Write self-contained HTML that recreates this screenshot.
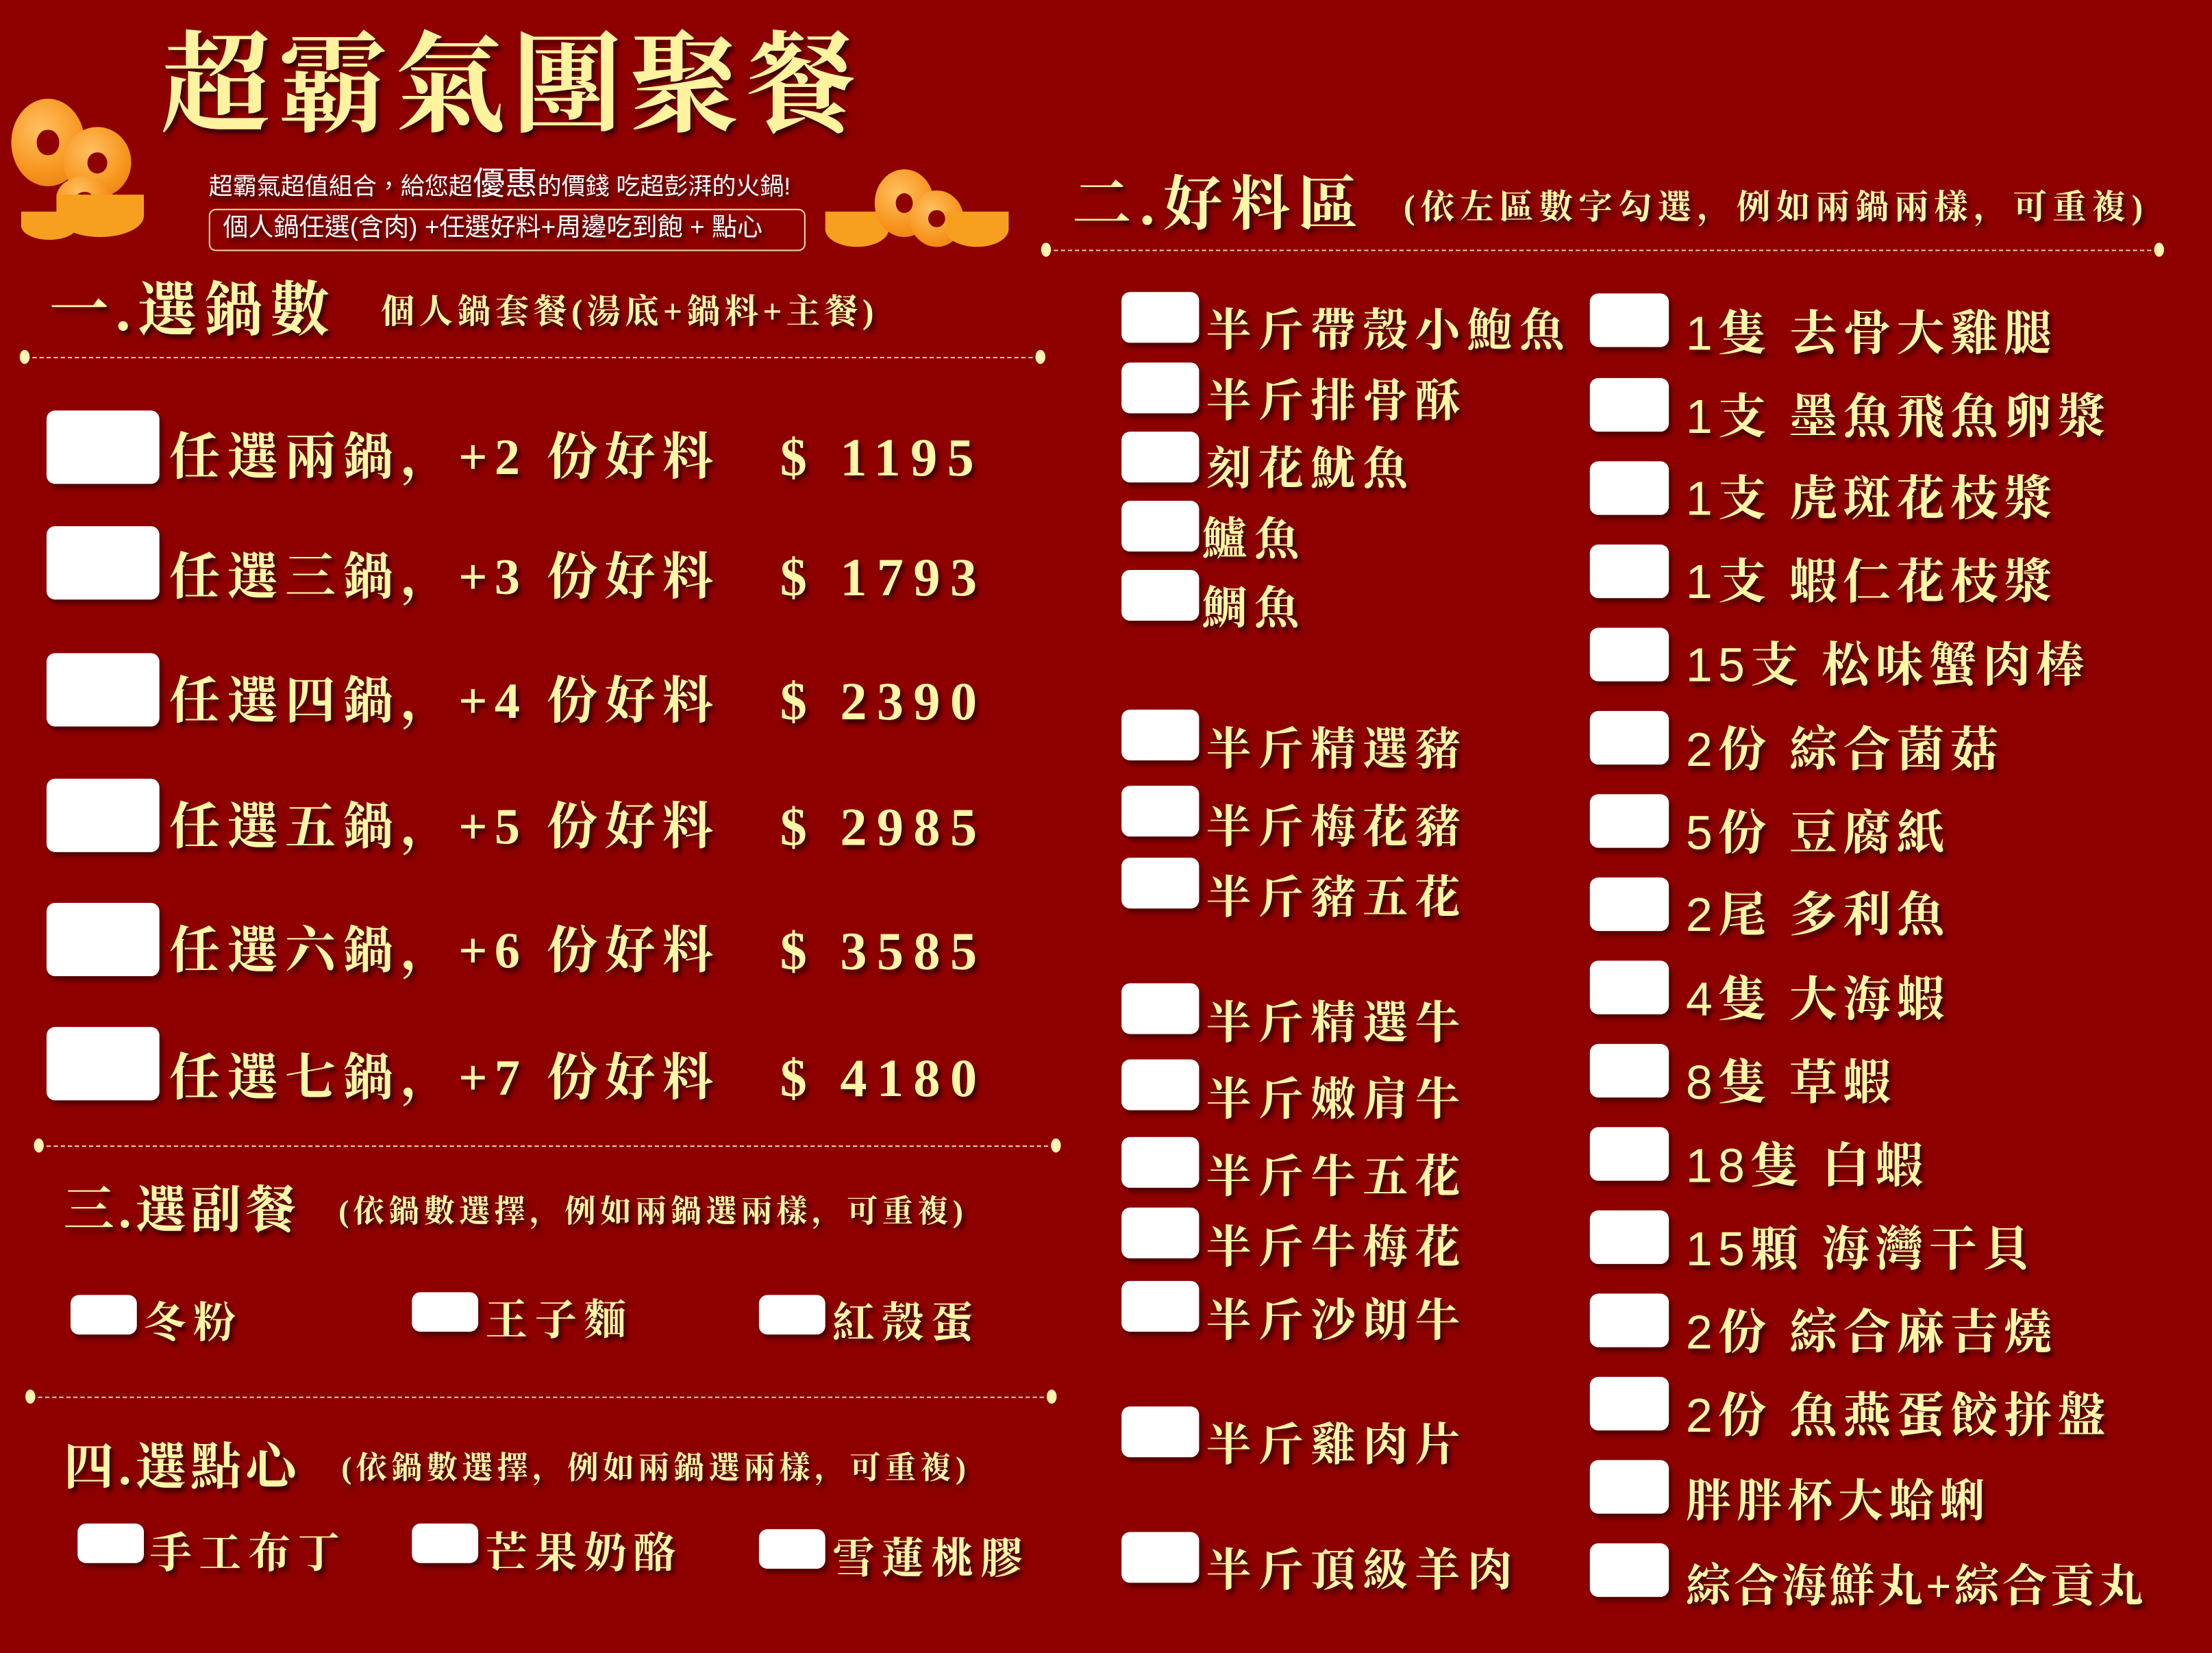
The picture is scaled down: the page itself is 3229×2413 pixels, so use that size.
<!DOCTYPE html>
<html><head><meta charset="utf-8">
<style>
html,body{margin:0;padding:0;background:#8e0000;overflow:hidden}
#w{width:1568px;height:1172px;position:relative;transform:scale(2.0593);transform-origin:0 0;background:#8e0000;font-family:"Liberation Serif","Noto Serif CJK SC","Noto Serif CJK TC",serif;color:#fff7a8;font-weight:bold}
.t{position:absolute;white-space:nowrap;text-shadow:2px 3px 3px rgba(40,0,0,.85);line-height:1}
.cb{position:absolute;background:#fff;border-radius:6px;box-shadow:2px 3px 3px rgba(40,0,0,.6)}
.dl{position:absolute;height:0;border-top:1.5px dashed #f3d9a0}
.dl:before,.dl:after{content:"";position:absolute;top:-6px;width:7px;height:10px;border-radius:50%;background:#fff4b0}
.dl:before{left:-4px}.dl:after{right:-4px}
.coin{position:absolute;border-radius:50%;background:radial-gradient(circle at 40% 35%,#ffc060,#f7941d 60%,#e07a10);}
.coin:after{content:"";position:absolute;left:35%;top:35%;width:30%;height:30%;background:#8e0000;border-radius:50%}
.ing{position:absolute;background:#f7a020;border-radius:0 0 50% 50%}
.sans{font-family:"Liberation Sans","Noto Sans CJK TC",sans-serif;font-weight:normal}
</style></head><body><div id="w">

<div class="coin" style="left:8px;top:70px;width:52px;height:62px"></div>
<div class="coin" style="left:45px;top:90px;width:48px;height:50px"></div>
<div class="ing" style="left:15px;top:150px;width:40px;height:20px"></div>
<div class="coin" style="left:40px;top:125px;width:40px;height:30px;border-radius:50%"></div>
<div class="ing" style="left:40px;top:138px;width:62px;height:30px"></div>
<div class="ing" style="left:585px;top:150px;width:45px;height:25px"></div>
<div class="coin" style="left:620px;top:120px;width:42px;height:48px"></div>
<div class="coin" style="left:645px;top:135px;width:38px;height:40px"></div>
<div class="ing" style="left:670px;top:150px;width:45px;height:25px"></div>

<div class="t" style="left:114px;top:22px;font-size:78px;letter-spacing:5px;color:#fff3a0">超霸氣團聚餐</div>
<div class="t sans" style="left:148px;top:119px;font-size:17px;color:#fff">超霸氣超值組合，給您超<span style="font-size:23px">優惠</span>的價錢 吃超彭湃的火鍋!</div>
<div style="position:absolute;left:148px;top:148px;width:421px;height:28px;border:1.5px solid #f3d9a0;border-radius:5px"></div>
<div class="t sans" style="left:158px;top:152px;font-size:18px;color:#fff">個人鍋任選(含肉) +任選好料+周邊吃到飽 + 點心</div>

<div class="t" style="left:760px;top:125px;font-size:42px;letter-spacing:6px">二.好料區</div>
<div class="t" style="left:995px;top:136px;font-size:24px;letter-spacing:4px">(依左區數字勾選，例如兩鍋兩樣，可重複)</div>
<div class="dl" style="left:742px;top:177px;width:788px"></div>

<div class="t" style="left:35px;top:200px;font-size:42px;letter-spacing:5px">一.選鍋數</div>
<div class="t" style="left:270px;top:210px;font-size:24px;letter-spacing:3px">個人鍋套餐(湯底+鍋料+主餐)</div>
<div class="dl" style="left:18px;top:253px;width:719px"></div>

<div class="cb" style="left:33px;top:291px;width:80px;height:52px"></div>
<div class="cb" style="left:33px;top:373px;width:80px;height:52px"></div>
<div class="cb" style="left:33px;top:463px;width:80px;height:52px"></div>
<div class="cb" style="left:33px;top:552px;width:80px;height:52px"></div>
<div class="cb" style="left:33px;top:640px;width:80px;height:52px"></div>
<div class="cb" style="left:33px;top:728px;width:80px;height:52px"></div>
<div class="t" style="left:120px;top:306px;font-size:36px;letter-spacing:5px">任選兩鍋，+2 份好料</div>
<div class="t" style="left:120px;top:391px;font-size:36px;letter-spacing:5px">任選三鍋，+3 份好料</div>
<div class="t" style="left:120px;top:479px;font-size:36px;letter-spacing:5px">任選四鍋，+4 份好料</div>
<div class="t" style="left:120px;top:568px;font-size:36px;letter-spacing:5px">任選五鍋，+5 份好料</div>
<div class="t" style="left:120px;top:656px;font-size:36px;letter-spacing:5px">任選六鍋，+6 份好料</div>
<div class="t" style="left:120px;top:746px;font-size:36px;letter-spacing:5px">任選七鍋，+7 份好料</div>
<div class="t" style="left:553px;top:306px;font-size:38px;letter-spacing:7px">$ 1195</div>
<div class="t" style="left:553px;top:391px;font-size:38px;letter-spacing:7px">$ 1793</div>
<div class="t" style="left:553px;top:479px;font-size:38px;letter-spacing:7px">$ 2390</div>
<div class="t" style="left:553px;top:568px;font-size:38px;letter-spacing:7px">$ 2985</div>
<div class="t" style="left:553px;top:656px;font-size:38px;letter-spacing:7px">$ 3585</div>
<div class="t" style="left:553px;top:746px;font-size:38px;letter-spacing:7px">$ 4180</div>
<div class="dl" style="left:28px;top:812px;width:720px"></div>

<div class="t" style="left:45px;top:840px;font-size:36px;letter-spacing:3px">三.選副餐</div>
<div class="t" style="left:240px;top:848px;font-size:22px;letter-spacing:3px">(依鍋數選擇，例如兩鍋選兩樣，可重複)</div>
<div class="cb" style="left:50px;top:918px;width:47px;height:28px"></div>
<div class="cb" style="left:292px;top:916px;width:47px;height:28px"></div>
<div class="cb" style="left:538px;top:918px;width:47px;height:28px"></div>
<div class="t" style="left:102px;top:924px;font-size:30px;letter-spacing:5px">冬粉</div>
<div class="t" style="left:344px;top:922px;font-size:30px;letter-spacing:5px">王子麵</div>
<div class="t" style="left:590px;top:924px;font-size:30px;letter-spacing:5px">紅殼蛋</div>
<div class="dl" style="left:22px;top:990px;width:723px"></div>

<div class="t" style="left:45px;top:1022px;font-size:36px;letter-spacing:3px">四.選點心</div>
<div class="t" style="left:242px;top:1030px;font-size:22px;letter-spacing:3px">(依鍋數選擇，例如兩鍋選兩樣，可重複)</div>
<div class="cb" style="left:55px;top:1080px;width:47px;height:28px"></div>
<div class="cb" style="left:292px;top:1080px;width:47px;height:28px"></div>
<div class="cb" style="left:538px;top:1084px;width:47px;height:28px"></div>
<div class="t" style="left:106px;top:1087px;font-size:30px;letter-spacing:5px">手工布丁</div>
<div class="t" style="left:344px;top:1087px;font-size:30px;letter-spacing:5px">芒果奶酪</div>
<div class="t" style="left:590px;top:1091px;font-size:30px;letter-spacing:5px">雪蓮桃膠</div>

<div class="cb" style="left:795px;top:207px;width:55px;height:36px"></div>
<div class="cb" style="left:795px;top:257px;width:55px;height:36px"></div>
<div class="cb" style="left:795px;top:306px;width:55px;height:36px"></div>
<div class="cb" style="left:795px;top:355px;width:55px;height:36px"></div>
<div class="cb" style="left:795px;top:404px;width:55px;height:36px"></div>
<div class="cb" style="left:795px;top:503px;width:55px;height:36px"></div>
<div class="cb" style="left:795px;top:557px;width:55px;height:36px"></div>
<div class="cb" style="left:795px;top:608px;width:55px;height:36px"></div>
<div class="cb" style="left:795px;top:697px;width:55px;height:36px"></div>
<div class="cb" style="left:795px;top:751px;width:55px;height:36px"></div>
<div class="cb" style="left:795px;top:806px;width:55px;height:36px"></div>
<div class="cb" style="left:795px;top:856px;width:55px;height:36px"></div>
<div class="cb" style="left:795px;top:908px;width:55px;height:36px"></div>
<div class="cb" style="left:795px;top:997px;width:55px;height:36px"></div>
<div class="cb" style="left:795px;top:1086px;width:55px;height:36px"></div>
<div class="t" style="left:855px;top:218px;font-size:32px;letter-spacing:5px">半斤帶殼小鮑魚</div>
<div class="t" style="left:855px;top:268px;font-size:32px;letter-spacing:5px">半斤排骨酥</div>
<div class="t" style="left:855px;top:316px;font-size:32px;letter-spacing:5px">刻花魷魚</div>
<div class="t" style="left:852px;top:366px;font-size:32px;letter-spacing:5px">鱸魚</div>
<div class="t" style="left:852px;top:415px;font-size:32px;letter-spacing:5px">鯛魚</div>
<div class="t" style="left:855px;top:515px;font-size:32px;letter-spacing:5px">半斤精選豬</div>
<div class="t" style="left:855px;top:570px;font-size:32px;letter-spacing:5px">半斤梅花豬</div>
<div class="t" style="left:855px;top:620px;font-size:32px;letter-spacing:5px">半斤豬五花</div>
<div class="t" style="left:855px;top:709px;font-size:32px;letter-spacing:5px">半斤精選牛</div>
<div class="t" style="left:855px;top:763px;font-size:32px;letter-spacing:5px">半斤嫩肩牛</div>
<div class="t" style="left:855px;top:818px;font-size:32px;letter-spacing:5px">半斤牛五花</div>
<div class="t" style="left:855px;top:868px;font-size:32px;letter-spacing:5px">半斤牛梅花</div>
<div class="t" style="left:855px;top:920px;font-size:32px;letter-spacing:5px">半斤沙朗牛</div>
<div class="t" style="left:855px;top:1008px;font-size:32px;letter-spacing:5px">半斤雞肉片</div>
<div class="t" style="left:855px;top:1097px;font-size:32px;letter-spacing:5px">半斤頂級羊肉</div>

<div class="cb" style="left:1127px;top:208px;width:56px;height:38px"></div>
<div class="cb" style="left:1127px;top:268px;width:56px;height:38px"></div>
<div class="cb" style="left:1127px;top:327px;width:56px;height:38px"></div>
<div class="cb" style="left:1127px;top:386px;width:56px;height:38px"></div>
<div class="cb" style="left:1127px;top:445px;width:56px;height:38px"></div>
<div class="cb" style="left:1127px;top:504px;width:56px;height:38px"></div>
<div class="cb" style="left:1127px;top:563px;width:56px;height:38px"></div>
<div class="cb" style="left:1127px;top:622px;width:56px;height:38px"></div>
<div class="cb" style="left:1127px;top:681px;width:56px;height:38px"></div>
<div class="cb" style="left:1127px;top:740px;width:56px;height:38px"></div>
<div class="cb" style="left:1127px;top:799px;width:56px;height:38px"></div>
<div class="cb" style="left:1127px;top:858px;width:56px;height:38px"></div>
<div class="cb" style="left:1127px;top:917px;width:56px;height:38px"></div>
<div class="cb" style="left:1127px;top:976px;width:56px;height:38px"></div>
<div class="cb" style="left:1127px;top:1035px;width:56px;height:38px"></div>
<div class="cb" style="left:1127px;top:1094px;width:56px;height:38px"></div>
<div class="t" style="left:1195px;top:220px;font-size:34px;letter-spacing:4px"><span class="sans">1</span>隻 去骨大雞腿</div>
<div class="t" style="left:1195px;top:279px;font-size:34px;letter-spacing:4px"><span class="sans">1</span>支 墨魚飛魚卵漿</div>
<div class="t" style="left:1195px;top:337px;font-size:34px;letter-spacing:4px"><span class="sans">1</span>支 虎斑花枝漿</div>
<div class="t" style="left:1195px;top:396px;font-size:34px;letter-spacing:4px"><span class="sans">1</span>支 蝦仁花枝漿</div>
<div class="t" style="left:1195px;top:455px;font-size:34px;letter-spacing:4px"><span class="sans">15</span>支 松味蟹肉棒</div>
<div class="t" style="left:1195px;top:515px;font-size:34px;letter-spacing:4px"><span class="sans">2</span>份 綜合菌菇</div>
<div class="t" style="left:1195px;top:574px;font-size:34px;letter-spacing:4px"><span class="sans">5</span>份 豆腐紙</div>
<div class="t" style="left:1195px;top:632px;font-size:34px;letter-spacing:4px"><span class="sans">2</span>尾 多利魚</div>
<div class="t" style="left:1195px;top:692px;font-size:34px;letter-spacing:4px"><span class="sans">4</span>隻 大海蝦</div>
<div class="t" style="left:1195px;top:751px;font-size:34px;letter-spacing:4px"><span class="sans">8</span>隻 草蝦</div>
<div class="t" style="left:1195px;top:810px;font-size:34px;letter-spacing:4px"><span class="sans">18</span>隻 白蝦</div>
<div class="t" style="left:1195px;top:869px;font-size:34px;letter-spacing:4px"><span class="sans">15</span>顆 海灣干貝</div>
<div class="t" style="left:1195px;top:928px;font-size:34px;letter-spacing:4px"><span class="sans">2</span>份 綜合麻吉燒</div>
<div class="t" style="left:1195px;top:987px;font-size:34px;letter-spacing:4px"><span class="sans">2</span>份 魚燕蛋餃拼盤</div>
<div class="t" style="left:1195px;top:1048px;font-size:32px;letter-spacing:4px">胖胖杯大蛤蜊</div>
<div class="t" style="left:1195px;top:1108px;font-size:32px;letter-spacing:2px">綜合海鮮丸+綜合貢丸</div>

</div></body></html>
